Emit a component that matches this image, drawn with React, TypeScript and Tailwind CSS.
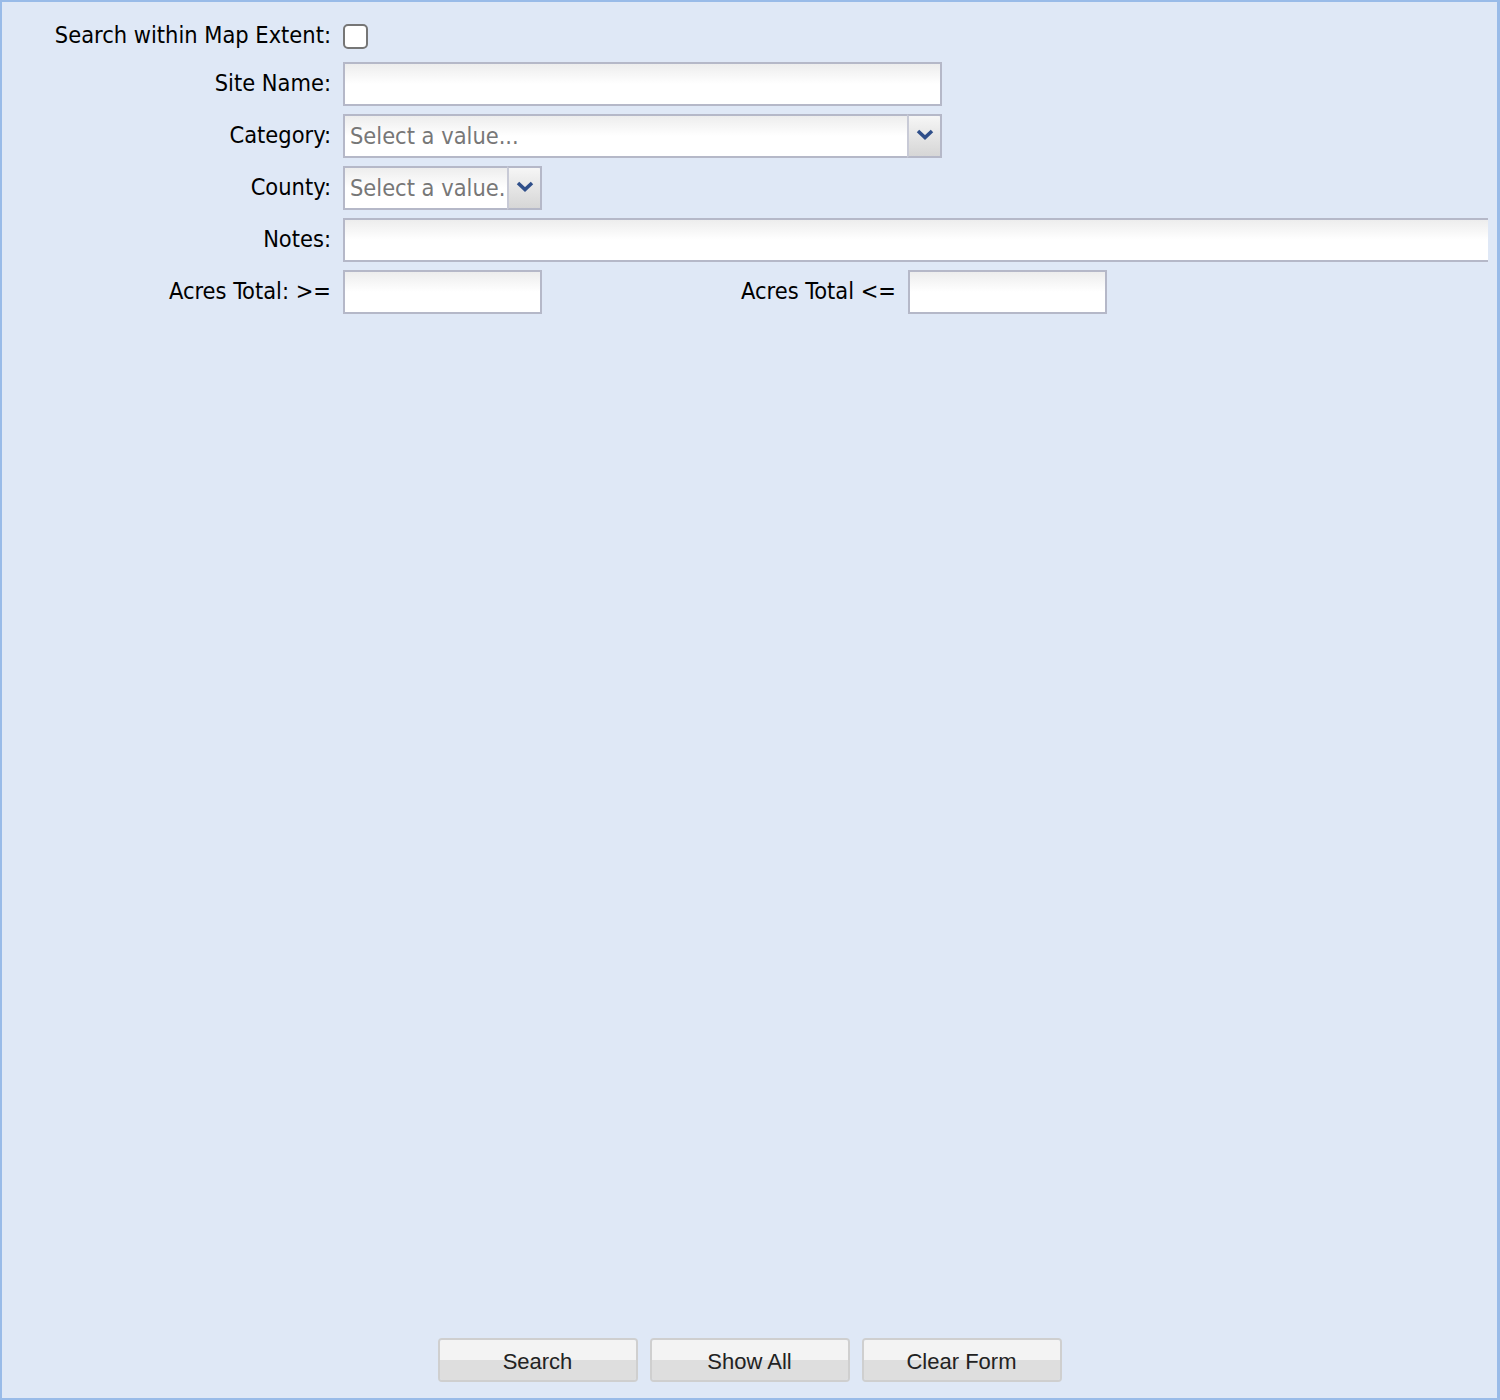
import React from "react";

const labelFont = { fontFamily: '"DejaVu Sans Condensed", "DejaVu Sans", sans-serif' };

function Label({ children, w = "w-[341px]" }: { children: React.ReactNode; w?: string }) {
  return (
    <div
      className={`${w} shrink-0 pr-[12px] text-right text-[23.4px] leading-none text-black whitespace-nowrap`}
      style={labelFont}
    >
      {children}
    </div>
  );
}

function TextBox({ w }: { w: string }) {
  return (
    <div
      className={`${w} h-[44px] shrink-0 border-2 border-[#b5b8c8] bg-white bg-gradient-to-b from-[#ededed] via-white to-white`}
    />
  );
}

function Combo({ w, text }: { w: string; text: string }) {
  return (
    <div className={`${w} h-[44px] shrink-0 flex border-2 border-[#b5b8c8] bg-white bg-gradient-to-b from-[#ededed] via-white to-white`}>
      <div
        className="flex-1 min-w-0 overflow-hidden whitespace-nowrap pl-[5px] pt-[1px] flex items-center text-[23.4px] text-[#777777]"
        style={labelFont}
      >
        {text}
      </div>
      <div className="w-[35px] shrink-0 -my-[2px] -mr-[2px] border-2 border-[#b5b8c8] border-l-[#c8cad6] rounded-tr-[3px] bg-gradient-to-b from-[#f6f6f6] to-[#d6d6d6] flex items-center justify-center pb-[4px]">
        <svg width="18" height="11" viewBox="0 0 18 11">
          <path d="M2 2 L9 8.5 L16 2" fill="none" stroke="#2f4f8a" strokeWidth="3.6" strokeLinejoin="miter" />
        </svg>
      </div>
    </div>
  );
}

function Btn({ children }: { children: React.ReactNode }) {
  return (
    <div className="w-[200px] h-[44px] rounded-[4px] border-2 border-[#cfcfcf] overflow-hidden flex flex-col relative">
      <div className="h-[20px] bg-[#f3f3f3]" />
      <div className="flex-1 bg-[#dedede]" />
      <div
        className="absolute inset-0 flex items-center justify-center pt-[2px] text-[22px] text-[#222222]"
        style={{ fontFamily: '"Liberation Sans", Arial, sans-serif' }}
      >
        {children}
      </div>
    </div>
  );
}

export default function App() {
  return (
    <div className="w-[1500px] h-[1400px] bg-[#dfe8f6] border-[2px] border-[#99bbe8] border-r-[3px] flex flex-col overflow-hidden">
      <div className="flex-1 overflow-hidden pr-[9px]">
        <div className="flex items-center h-[44px] mt-[12px] mb-[4px]">
          <Label>Search within Map Extent:</Label>
          <div className="w-[25px] h-[25px] rounded-[5px] border-2 border-[#767676] bg-white" />
        </div>
        <div className="flex items-center h-[44px] mb-[8px]">
          <Label>Site Name:</Label>
          <TextBox w="w-[599px]" />
        </div>
        <div className="flex items-center h-[44px] mb-[8px]">
          <Label>Category:</Label>
          <Combo w="w-[599px]" text="Select a value..." />
        </div>
        <div className="flex items-center h-[44px] mb-[8px]">
          <Label>County:</Label>
          <Combo w="w-[199px]" text="Select a value..." />
        </div>
        <div className="flex items-center h-[44px] mb-[8px] overflow-hidden">
          <Label>Notes:</Label>
          <TextBox w="w-[1300px]" />
        </div>
        <div className="flex items-center h-[44px]">
          <Label>Acres Total: &gt;=</Label>
          <TextBox w="w-[199px]" />
          <div className="w-[366px] shrink-0 pr-[12px] text-right text-[23.4px] leading-none text-black whitespace-nowrap" style={labelFont}>
            Acres Total &lt;=
          </div>
          <TextBox w="w-[199px]" />
        </div>
      </div>
      <div className="flex justify-center gap-[12px] pb-[16px]">
        <Btn>Search</Btn>
        <Btn>Show All</Btn>
        <Btn>Clear Form</Btn>
      </div>
    </div>
  );
}
